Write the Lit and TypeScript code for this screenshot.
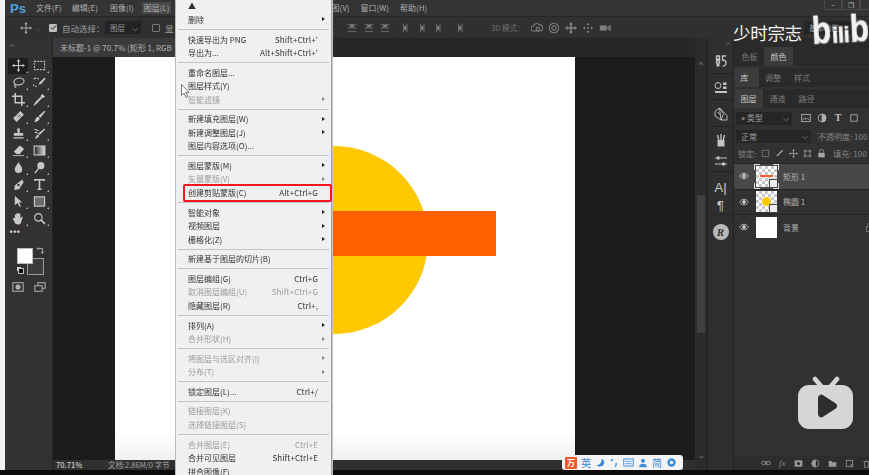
import { LitElement, html, css, svg } from "lit";
import { customElement } from "lit/decorators.js";

const S = (c: unknown, cls = "ic", w = 14, h = 14) =>
  html`<svg class=${cls} width=${w} height=${h} viewBox="0 0 14 14" fill="none" stroke="currentColor" stroke-width="1.2">${c}</svg>`;

const moveP = svg`<path d="M7 1v12M1 7h12"/><path fill="currentColor" stroke="none" d="M7 0l2 2.600H5zM7 14l-2-2.600h4zM0 7l2.600-2v4zM14 7l-2.600 2V5z"/>`;

const toolIcons: unknown[] = [
  moveP,
  svg`<rect x="1.500" y="2.500" width="11" height="9" stroke-dasharray="2 1.300"/>`,
  svg`<ellipse cx="7.500" cy="6" rx="5.500" ry="3.600" transform="rotate(-12 7.500 6)"/><path d="M3.500 9c-1 1.500-.5 3 1 3.500"/>`,
  svg`<path fill="currentColor" stroke="none" d="M12.500 1.500L7 7 6 9.500 8.800 8.500 13.600 3z"/><path d="M6 3.200A4.400 4.400 0 1 0 4 11" stroke-dasharray="2 1"/>`,
  svg`<path stroke-width="1.600" d="M3.500 0v10.500H14M0 3.500h10.500V14"/>`,
  svg`<path fill="currentColor" stroke="none" d="M10 1l3 3-2.200 1.400-.6-.6-5.400 6L2.600 12.600 1.300 13.600.6 13l1-1.500 1.200-2.200 5.900-5.400-.6-.6z"/>`,
  svg`<path fill="currentColor" stroke="none" d="M9 1.200l3.800 3.800L5 12.800 1.200 9z"/><path stroke="#333" stroke-width=".8" d="M5.500 6l2.500 2.500M7 4.500L9.500 7"/>`,
  svg`<path fill="currentColor" stroke="none" d="M12.500 .8l.9.8L8 8.300 6 6.500zM5.400 7.200l1.900 1.700C7 11.500 4 13 1 12.800c1.500-1 1.700-3 1.700-3 .5-1.500 1.500-2.400 2.700-2.600z"/>`,
  svg`<path fill="currentColor" stroke="none" d="M5.500 1.500h3L8 6.500h4v3H2v-3h4zM1.500 11h11v1.500h-11z"/>`,
  svg`<path fill="currentColor" stroke="none" d="M12.500 1.500l.8.8L7 8.500 5.500 7zM5 7.800L6.500 9.200C6 11.500 4 12.500 2 12.500c1-1 1-2.500 3-4.700z"/><path d="M1.500 2.500L6 4M2 5.500l3 1"/>`,
  svg`<path fill="currentColor" stroke="none" d="M8.500 1.500l4.500 4-4.800 5.500-3.600-.1L2 8z"/><path d="M1 12.500h12" stroke-width=".9"/>`,
  svg`<defs><linearGradient id="gr"><stop offset="0" stop-color="#222"/><stop offset="1" stop-color="#ddd"/></linearGradient></defs><rect x="1.200" y="2.200" width="11.600" height="9.600" fill="url(#gr)" stroke="#ccc"/>`,
  svg`<path fill="currentColor" stroke="none" d="M7 1c1 2.500 4 4.800 4 7.800a4 4 0 0 1-8 0C3 5.800 6 3.500 7 1z"/>`,
  svg`<circle cx="8.500" cy="5" r="3.800" fill="currentColor" stroke="none"/><path stroke-width="1.500" d="M6 8l-4 5"/>`,
  svg`<path fill="currentColor" stroke="none" d="M11 1.500l1.500 3-5 7.500-5 1 .5-5z"/><circle cx="7" cy="7.500" r="1.300" fill="#333" stroke="none"/>`,
  svg`<path stroke-width="1.700" d="M2 3.200V1.800h10v1.400M7 1.800v10M4.800 12.200h4.400"/>`,
  svg`<path fill="currentColor" stroke="none" d="M3 .8l8 7.200H7.600l1.900 4.200-1.500.7-1.800-4.300L3 11z"/>`,
  svg`<rect x="1.500" y="2" width="11" height="10" fill="#6a6a6a" stroke="#ccc"/>`,
  svg`<path fill="currentColor" stroke="none" d="M3 6.500V3a.8.800 0 0 1 1.500 0v3-4a.8.800 0 0 1 1.500 0v4-4.500a.8.800 0 0 1 1.500 0V6V2a.8.800 0 0 1 1.500 0v5l1-1.500c.8-1 2-.2 1.400.8L9.500 12c-.5 1-1.500 1.500-2.500 1.500-3 0-4-1.500-4.500-3L1 7.500c-.3-1 .8-1.500 1.300-.8z"/>`,
  svg`<circle cx="5.800" cy="5.800" r="4"/><path stroke-width="1.800" d="M8.800 8.800l4 4"/>`,
];

const alignP = (v: number) =>
  v === 0
    ? svg`<path d="M1 2h12M1 7h12M1 12h12" stroke-width="1"/><rect x="4" y="3" width="6" height="3" fill="currentColor" stroke="none"/>`
    : svg`<path d="M2 1v12M7 1v12" stroke-width="1"/><rect x="3" y="4" width="3" height="6" fill="currentColor" stroke="none"/>`;

const threeD: unknown[] = [
  svg`<path d="M3 10.500a3 3 0 0 1 0-6 3.500 3.500 0 0 1 6.500-1 3.500 3.500 0 0 1 1.500 7z"/><circle cx="8" cy="8" r="2"/>`,
  svg`<circle cx="7" cy="7" r="5.500"/><circle cx="7" cy="7" r="2.500"/>`,
  svg`<path fill="currentColor" stroke="none" d="M7 0l2.500 3H8v3h3V4.500L14 7l-3 2.500V8H8v3h1.500L7 14l-2.500-3H6V8H3v1.500L0 7l3-2.500V6h3V3H4.500z"/>`,
  svg`<path fill="currentColor" stroke="none" d="M7 1l2 2.500H5zM7 13l-2-2.500h4zM1 7l2.500-2v4zM13 7l-2.500 2V5z"/><circle cx="7" cy="7" r="1.200" fill="currentColor" stroke="none"/>`,
  svg`<rect x="1" y="4" width="8" height="6" fill="currentColor" stroke="none"/><path d="M10 7l3-2.500v5z"/>`,
];

const dockIcons: unknown[] = [
  svg`<path stroke-width="1.300" d="M2.500 2h3v3h-3zM2.500 6.500h3v2.500h-3z"/><rect x="2.500" y="10" width="3" height="2.500" fill="currentColor" stroke="none"/><path d="M12 2H8.500v4c3 0 3.500 1 3.500 3s-2 3.500-3.500 3" stroke-width="1.300"/>`,
  svg`<circle cx="4" cy="4.500" r="3" stroke-width="1"/><rect x="9" y="1.500" width="3.500" height="2.500" fill="currentColor" stroke="none"/><rect x="9" y="5.500" width="3.500" height="2.500" fill="currentColor" stroke="none"/><path d="M1 11h12" stroke-width="2"/>`,
  svg`<path d="M1 4.500L5.500 1l4 5.500L7 13 1 9zM5.500 1l7.500 7.500V13H7zM3.500 5l3 3" stroke-width=".9"/>`,
];

const dock2: unknown[] = [
  svg`<rect x="3.500" y="7" width="7" height="6.500" fill="currentColor" stroke="none"/><path stroke-width="1.300" d="M7 7V1M4.800 7L3.500 2M9.200 7l1.300-5"/>`,
  svg`<path stroke-width="1.100" d="M1 4h12M1 10h12"/><rect x="3" y="2.500" width="2.500" height="3" fill="currentColor" stroke="none"/><circle cx="9.500" cy="10" r="1.800" fill="currentColor" stroke="none"/>`,
];

const eye = svg`<path d="M1 7s2.500-4 6-4 6 4 6 4-2.500 4-6 4-6-4-6-4z"/><circle cx="7" cy="7" r="2" fill="currentColor"/>`;

type Row = { t?: string; k?: string; a?: boolean; d?: boolean } | null;
const menu: Row[] = [
  { t: "▲" },
  { t: "删除", a: true }, null,
  { t: "快速导出为 PNG", k: "Shift+Ctrl+'" },
  { t: "导出为...", k: "Alt+Shift+Ctrl+'" }, null,
  { t: "重命名图层..." },
  { t: "图层样式(Y)" },
  { t: "智能滤镜", a: true, d: true }, null,
  { t: "新建填充图层(W)", a: true },
  { t: "新建调整图层(J)", a: true },
  { t: "图层内容选项(O)..." }, null,
  { t: "图层蒙版(M)", a: true },
  { t: "矢量蒙版(V)", a: true, d: true },
  { t: "创建剪贴蒙版(C)", k: "Alt+Ctrl+G" }, null,
  { t: "智能对象", a: true },
  { t: "视频图层", a: true },
  { t: "栅格化(Z)", a: true }, null,
  { t: "新建基于图层的切片(B)" }, null,
  { t: "图层编组(G)", k: "Ctrl+G" },
  { t: "取消图层编组(U)", k: "Shift+Ctrl+G", d: true },
  { t: "隐藏图层(R)", k: "Ctrl+," }, null,
  { t: "排列(A)", a: true },
  { t: "合并形状(H)", a: true, d: true }, null,
  { t: "将图层与选区对齐(I)", a: true, d: true },
  { t: "分布(T)", a: true, d: true }, null,
  { t: "锁定图层(L)...", k: "Ctrl+/" }, null,
  { t: "链接图层(K)", d: true },
  { t: "选择链接图层(S)", d: true }, null,
  { t: "合并图层(E)", k: "Ctrl+E", d: true },
  { t: "合并可见图层", k: "Shift+Ctrl+E" },
  { t: "拼合图像(F)" },
];

@customElement("app-root")
export class AppRoot extends LitElement {
  static styles = css`
    :host { display:block; width:869px; height:475px; position:relative; overflow:hidden; background:#0c0c0c;
      font-family:"Noto Sans CJK SC","Liberation Sans",sans-serif; }
    * { box-sizing:border-box; }
    .root { width:869px; height:475px; display:flex; flex-direction:column; background:#0b0b0b; filter:blur(.4px); position:relative; }
    .app { height:470px; padding-left:5px; background:#f2f2f2; display:flex; flex-direction:column; flex:none; }
    .bar { height:16px; background:#343434; display:flex; align-items:center; color:#b0b0b0; font-size:8px; flex:none; position:relative; }
    .ps { color:#4f9fe0; font:bold 13px "Liberation Sans",sans-serif; width:29px; padding-left:5px; }
    .mi { padding:0 2px; display:inline-block; line-height:12px; }
    .mi1 { margin-right:6px; } .mi2 { margin-right:8px; } .mi3 { margin-right:6px; }
    .mi-on { background:#484848; margin-right:158px; }
    .mi-v { margin-right:7px; }
    .win { margin-left:auto; display:flex; height:10px; align-self:flex-start; }
    .win span { width:18px; border:1px solid #4a4a4a; border-top:none; color:#bbb; display:flex; align-items:center; justify-content:center; font-size:7px; line-height:8px; }
    .win span.w3 { width:9px; border-right:none; }
    .opts { height:22px; background:#303030; border-top:1px solid #262626; display:flex; align-items:center; color:#a0a0a0; font-size:8.500px; flex:none; padding-left:15px; }
    .opts .ic { color:#a8a8a8; }
    .chev { color:#888; font-size:7px; margin-left:3px; width:11px; }
    .chk { width:8px; height:8px; background:#bdbdbd; border-radius:1px; margin-left:3px; display:flex; align-items:center; justify-content:center; }
    .unchk { width:8px; height:8px; border:1px solid #777; border-radius:1px; margin-left:11px; }
    .opt-l { margin-left:5px; width:38px; white-space:nowrap; }
    .sel { width:36px; height:13px; margin-left:5px; background:#222; color:#999; display:flex; align-items:center; justify-content:space-between; padding:0 3px 0 5px; font-size:7.500px; flex:none; }
    .show { margin-left:5px; width:182px; }
    .align { display:flex; gap:12px; width:144px; }
    .ag { display:flex; gap:6.500px; }
    .align .ic, .d3i .ic { color:#808080; }
    .d3 { color:#6e6e6e; width:40px; font-size:7.500px; white-space:nowrap; }
    .d3i { display:flex; gap:5px; }
    .func { margin-left:auto; margin-right:17px; width:48px; height:13px; background:#242424; color:#999; font-size:7.500px; padding-left:5px; line-height:13px; white-space:nowrap; overflow:hidden; }
    .main { flex:1; display:flex; min-height:0; }
    .tools { width:48px; background:#343231; border-right:1px solid #222; display:flex; flex-direction:column; align-items:center; color:#c8c8c8; flex:none; position:relative; }
    .coll { height:19px; width:100%; font-size:7px; color:#888; padding-left:5px; line-height:12px; }
    .grid { display:grid; grid-template-columns:21px 21px; grid-auto-rows:17px; justify-items:center; align-items:center; }
    .t { width:20px; height:16px; display:flex; align-items:center; justify-content:center; position:relative; }
    .t::after { content:""; position:absolute; right:0; bottom:1px; border:solid transparent; border-width:0 0 2.500px 2.500px; border-bottom-color:#bbb; }
    .t.on { background:#1d1d1d; border-radius:1px; }
    .more { font:bold 9px "Liberation Sans",sans-serif; letter-spacing:.5px; height:17px; line-height:10px; width:42px; padding-left:2px; color:#ccc; position:relative; flex:none; }
    .swatch { position:relative; width:42px; height:36px; flex:none; }
    .fg { position:absolute; left:9px; top:4px; width:16px; height:16px; background:#fff; border:1px solid #bbb; z-index:1; }
    .bg { position:absolute; left:19px; top:14px; width:17px; height:17px; background:#3c3c3c; border:1px solid #999; }
    .sw-a { position:absolute; left:28px; top:2px; color:#ccc; }
    .sw-d { position:absolute; left:10px; top:24px; width:6px; height:6px; background:#111; border:1px solid #bbb; box-shadow:-2px -2px 0 -1px #ddd; }
    .modes { display:flex; gap:10px; margin-top:1px; color:#b0b0b0; }
    .center { width:642px; display:flex; flex-direction:column; flex:none; }
    .tabs { height:19px; background:#272727; flex:none; display:flex; }
    .tab { width:122px; background:#3b3b3b; color:#b0b0b0; font-size:8px; line-height:19px; padding-left:7px; white-space:nowrap; overflow:hidden; }
    .doc { flex:1; background:#1c1c1e; padding-left:62px; min-height:0; }
    .canvas { width:460px; height:100%; position:relative; overflow:hidden; background:linear-gradient(#fff 93%, #f1f1f3); }
    .circle { position:absolute; left:125px; top:89px; width:188px; height:188px; border-radius:50%; background:#ffc800; }
    .rect { position:absolute; left:175px; top:154px; width:206px; height:45px; background:#ff6000; }
    .status { height:10px; background:#303030; flex:none; color:#a5a5a5; font-size:7.500px; line-height:10px; display:flex; padding-left:3px; }
    .status b { font-weight:500; width:52px; color:#ccc; }
    .scroll { width:12px; background:#2b2b2b; flex:none; display:flex; flex-direction:column; align-items:center; padding-top:19px; color:#777; font-size:7px; position:relative; }
    .scroll i { font-style:normal; height:11px; transform:scaleX(1.500); line-height:15px; }
    .track { width:8px; height:138px; background:#3f3f3f; margin-top:127px; }
    .scroll .dn { margin-top:auto; margin-bottom:11px; }
    .dock { width:26px; background:#2f2f2f; border-left:1px solid #1f1f1f; flex:none; display:flex; flex-direction:column; align-items:center; color:#c4c4c4; padding-top:9px; position:relative; }
    .dock-c { position:absolute; right:3px; top:0; font-size:7px; color:#888; line-height:9px; }
    .dg { width:100%; display:flex; flex-direction:column; align-items:center; justify-content:center; flex:none; border-bottom:1px solid #232323; }
    .h1 { height:26.500px; padding-top:3px; } .h2 { height:45px; gap:7px; padding-top:4px; } .h3 { height:43px; gap:3px; padding-top:8px; } .h4 { height:35px; border-bottom:none; }
    .dg .ra { font:13px "Liberation Sans",sans-serif; line-height:15px; color:#ccc; }
    .rcirc { width:16px; height:16px; border-radius:50%; background:#b9b9b9; color:#333; font:italic bold 11px "Liberation Serif",serif; text-align:center; line-height:16px; }
    .panel { flex:1; background:#313131; min-width:0; display:flex; flex-direction:column; color:#a8a8a8; font-size:8px; position:relative; overflow:hidden; border-left:1px solid #222; }
    .ph { height:9px; flex:none; background:#2a2a2a; }
    .ptabs { height:19px; margin-bottom:2px; display:flex; background:#2a2a2a; flex:none; align-items:stretch; color:#7a7a7a; }
    .ptabs.last { margin-bottom:0; }
    .ptabs span { padding:0 6.500px; line-height:19px; }
    .ptabs span.on { background:#3b3b3b; color:#c8c8c8; }
    .ptabs.first { padding-left:1px; }
    .ptabs span.sp { padding-right:10px; }
    .row { display:flex; align-items:center; flex:none; white-space:nowrap; }
    .r1 { height:20px; padding-left:2px; gap:6px; }
    .field { height:13px; background:#262626; color:#a0a0a0; display:flex; align-items:center; justify-content:space-between; padding:0 3px 0 5px; flex:none; }
    .f1 { width:56px; margin-right:3px; } .f2 { width:75px; }
    .r1 .ic { color:#b0b0b0; }
    .tt { font:bold 10px "Liberation Serif",serif; color:#bbb; width:10px; text-align:center; line-height:10px; }
    .r2 { height:16px; padding-left:2px; gap:7px; color:#858585; overflow:hidden; }
    .r3 { height:19px; padding-left:4px; gap:5px; color:#858585; }
    .r3 .ic { color:#a5a5a5; }
    .fill { margin-left:2px; }
    .layer { height:25.500px; display:flex; align-items:center; border-top:1px solid #262626; color:#b0b0b0; flex:none; padding-left:4px; position:relative; }
    .layer.on { background:#484848; }
    .eye { color:#ccc; width:18px; flex:none; padding-right:6px; }
    .thumb { width:21px; height:21px; position:relative; background:#fff; margin-right:6px; flex:none; }
    .chk-bg { background:repeating-conic-gradient(#c8c8c8 0 25%, #fff 0 50%) 0 0/6px 6px; }
    .thumb .bar-o { position:absolute; left:4px; right:4px; top:9px; height:2.500px; background:#f0622a; }
    .thumb .dot { position:absolute; left:6px; top:6px; width:9px; height:9px; border-radius:50%; background:#ffc800; }
    .badge { position:absolute; right:-1px; bottom:-1px; width:9px; height:9px; background:#eee; border:1px solid #444; }
    .frame { position:absolute; inset:-2px; --c:#ddd;
      background:
        linear-gradient(var(--c),var(--c)) 0 0/6px 1px no-repeat, linear-gradient(var(--c),var(--c)) 0 0/1px 6px no-repeat,
        linear-gradient(var(--c),var(--c)) 100% 0/6px 1px no-repeat, linear-gradient(var(--c),var(--c)) 100% 0/1px 6px no-repeat,
        linear-gradient(var(--c),var(--c)) 0 100%/6px 1px no-repeat, linear-gradient(var(--c),var(--c)) 0 100%/1px 6px no-repeat,
        linear-gradient(var(--c),var(--c)) 100% 100%/6px 1px no-repeat, linear-gradient(var(--c),var(--c)) 100% 100%/1px 6px no-repeat; }
    .lock { position:absolute; right:-5px; top:8px; color:#888; }
    .pfoot { margin-top:auto; height:14px; background:#2d2d2d; display:flex; align-items:center; gap:8px; padding-left:27px; color:#8a8a8a; flex:none; font:italic 9px "Liberation Serif",serif; }
    .pfoot svg { color:#999; flex:none; }
    .pfoot span { width:9px; text-align:center; }
    .menu { position:absolute; left:175px; top:0; width:156px; height:480px; background:#f0f0f0; border-left:1px solid #bbb; box-shadow:1px 0 0 #a0a0a0, 2px 0 0 #c4c4c4; color:#333; font-size:8px; z-index:3; overflow:hidden; }
    .mtop { margin-top:-.6px; }
    .mrow { height:13.500px; line-height:13.500px; padding-left:12px; display:flex; position:relative; white-space:nowrap; }
    .mrow.dis { color:#9b9b9b; }
    .mk { position:absolute; right:13px; top:0; letter-spacing:.1px; }
    .ma { position:absolute; right:6px; top:4.500px; border-left:3px solid #222; border-top:2.500px solid transparent; border-bottom:2.500px solid transparent; }
    .dis .ma { border-left-color:#888; }
    .msep { height:6.150px; padding:2.600px 2px 0; }
    .msep::before { content:""; display:block; height:1px; background:#c4c4c4; }
    .hit { position:absolute; left:183px; top:184px; width:149px; height:18px; border:2px solid #f2161e; border-radius:2px; z-index:4; }
    .cursor { position:absolute; left:181px; top:84px; z-index:4; }
    .wm { position:absolute; left:733px; top:21px; color:#f4f4f4; font-size:17.500px; z-index:5; line-height:24px; white-space:nowrap; letter-spacing:-.3px; }
    .bili { position:absolute; left:812px; top:13px; color:#f2f2f2; font:900 38px/36px "Liberation Sans",sans-serif; z-index:5; transform:rotate(-3deg); transform-origin:left; white-space:nowrap; display:flex; align-items:baseline; -webkit-text-stroke:.6px #f2f2f2; }
    .bili .big { display:inline-block; width:20px; transform:scaleX(.82); transform-origin:left; }
    .bili .sm { display:inline-block; font-size:22px; width:18px; letter-spacing:-.3px; }
    .tv { position:absolute; left:797px; top:376px; z-index:5; }
    .ime { position:absolute; left:562px; top:455px; width:121px; height:15px; background:#f4f4f4; border-radius:3px; z-index:5; display:flex; align-items:center; padding-left:3px; color:#3a8ad8; font-size:10px; justify-content:space-between; padding-right:6px; }
    .ime .logo { width:12px; height:12px; background:#ef5a28; color:#fff; font:bold 8px "Noto Sans CJK SC",sans-serif; text-align:center; line-height:12px; border-radius:1px; }
    .ghost { height:5px; background:#0b0b0b; }
  `;

  private mi(t: string, cls: string) { return html`<span class="mi ${cls}">${t}</span>`; }

  render() {
    const ti = toolIcons.map((p, i) => html`<div class="t ${i === 0 ? "on" : ""}">${S(p, "ic", 13, 13)}</div>`);
    return html`<div class="root">
      <div class="app">
        <div class="bar">
          <span class="ps">Ps</span>
          ${this.mi("文件(F)", "mi1")}${this.mi("编辑(E)", "mi2")}${this.mi("图像(I)", "mi3")}${this.mi("图层(L)", "mi-on")}
          ${this.mi("图(V)", "mi-v")}${this.mi("窗口(W)", "mi-v")}${this.mi("帮助(H)", "mi-v")}
          <div class="win"><span>−</span><span>❐</span><span class="w3"></span></div>
        </div>
        <div class="opts">
          ${S(moveP, "ic", 12, 12)}<span class="chev">⌵</span>
          <span class="chk">${S(svg`<path stroke="#222" stroke-width="2" d="M2 7l3.500 3.500L12 3"/>`, "ic", 7, 7)}</span>
          <span class="opt-l">自动选择：</span>
          <span class="sel">图层<span>⌵</span></span>
          <span class="unchk"></span><span class="show">显</span>
          <div class="align">
            <div class="ag">${[0, 0, 0].map((v) => S(alignP(v), "ic", 10, 10))}</div>
            <div class="ag">${[1, 1, 1].map((v) => S(alignP(v), "ic", 10, 10))}</div>
            <div class="ag">${S(alignP(1), "ic", 10, 10)}</div>
          </div>
          <span class="d3">3D 模式：</span>
          <div class="d3i">${threeD.map((p) => S(p, "ic", 12, 12))}</div>
          <span class="func">基本功能</span>
        </div>
        <div class="main">
          <div class="tools">
            <div class="coll">‹‹</div>
            <div class="grid">${ti}</div>
            <div class="more">•••</div>
            <div class="swatch">
              <div class="bg"></div><div class="fg"></div><div class="sw-d"></div>
              ${S(svg`<path d="M2 4h8v7M8 9l2 2.500 2-2.500M4 2L2 4l2 2"/>`, "sw-a", 9, 9)}
            </div>
            <div class="modes">
              ${S(svg`<rect x="1" y="2" width="12" height="10"/><circle cx="7" cy="7" r="3" fill="currentColor" stroke="none"/>`, "ic", 12, 12)}
              ${S(svg`<rect x="4.500" y="2" width="8.500" height="6.500"/><rect x="1" y="5.500" width="8.500" height="6.500" fill="#343231"/>`, "ic", 12, 12)}
            </div>
          </div>
          <div class="center">
            <div class="tabs"><div class="tab">未标题-1 @ 70.7% (矩形 1, RGB</div></div>
            <div class="doc"><div class="canvas"><div class="circle"></div><div class="rect"></div></div></div>
            <div class="status"><b>70.71%</b><span>文档:2.86M/0 字节</span></div>
          </div>
          <div class="scroll"><i>^</i><div class="track"></div><i class="dn">⌄</i></div>
          <div class="dock">
            <span class="dock-c">‹‹</span>
            ${dockIcons.map((p) => html`<div class="dg h1">${S(p, "ic", 14, 14)}</div>`)}
            <div class="dg h2">${dock2.map((p) => S(p, "ic", 14, 14))}</div>
            <div class="dg h3"><span class="ra">A|</span><span class="ra">¶</span></div>
            <div class="dg h4"><span class="rcirc">R</span></div>
          </div>
          <div class="panel">
            <div class="ph"></div>
            <div class="ptabs first"><span>色板</span><span class="on">颜色</span></div>
            <div class="ptabs"><span class="on sp">库</span><span>调整</span><span>样式</span></div>
            <div class="ptabs last"><span class="on">图层</span><span>通道</span><span>路径</span></div>
            <div class="row r1"><span class="field f1">⌕ 类型<span>⌵</span></span>
              ${S(svg`<rect x="1" y="2" width="12" height="10"/><path d="M2 10l3-3 2 2 2-2 3 3" />`, "ic", 10, 10)}
              ${S(svg`<circle cx="7" cy="7" r="5.500"/><path fill="currentColor" d="M7 1.500a5.500 5.500 0 0 1 0 11z"/>`, "ic", 10, 10)}
              <span class="tt">T</span>
              ${S(svg`<rect x="2.500" y="2.500" width="9" height="9"/>`, "ic", 10, 10)}
            </div>
            <div class="row r2"><span class="field f2">正常<span>⌵</span></span><span>不透明度: 100</span></div>
            <div class="row r3"><span>锁定:</span>
              ${S(svg`<rect x="2" y="2" width="10" height="10" stroke-dasharray="2 1"/>`, "ic", 9, 9)}
              ${S(svg`<path stroke-width="2" d="M12 2L3 11"/>`, "ic", 9, 9)}
              ${S(moveP, "ic", 9, 9)}
              ${S(svg`<path d="M1 3h12M3 1v12M11 1v12M1 11h12"/>`, "ic", 9, 9)}
              ${S(svg`<rect x="2" y="6" width="10" height="7" fill="currentColor" stroke="none"/><path d="M4 6V3.500a3 3 0 0 1 6 0V6"/>`, "ic", 9, 9)}
              <span class="fill">填充: 100</span></div>
            <div class="layer on">
              ${S(eye, "eye", 18, 10)}
              <div class="thumb chk-bg"><div class="bar-o"></div><div class="badge"></div><div class="frame"></div></div><span>矩形 1</span>
            </div>
            <div class="layer">
              ${S(eye, "eye", 18, 10)}
              <div class="thumb chk-bg"><div class="dot"></div><div class="badge"></div></div><span>椭圆 1</span>
            </div>
            <div class="layer">
              ${S(eye, "eye", 18, 10)}
              <div class="thumb"></div><span>背景</span>
              ${S(svg`<rect x="2" y="6" width="10" height="7"/><path d="M4 6V3.500a3 3 0 0 1 6 0V6"/>`, "lock", 9, 9)}
            </div>
            <div class="pfoot">
              ${S(svg`<path d="M5 7h4"/><rect x="1" y="4.500" width="6" height="5" rx="2.500"/><rect x="7" y="4.500" width="6" height="5" rx="2.500"/>`, "ic", 10, 10)}
              <span>fx</span>
              ${S(svg`<rect x="1" y="2" width="12" height="10" fill="currentColor" stroke="none"/><circle cx="7" cy="7" r="2.500" fill="#2d2d2d" stroke="none"/>`, "ic", 9, 9)}
              ${S(svg`<circle cx="7" cy="7" r="5.500"/><path fill="currentColor" d="M7 1.500a5.500 5.500 0 0 0 0 11z"/>`, "ic", 9, 9)}
              ${S(svg`<path fill="currentColor" stroke="none" d="M1 3h5l1 2h6v7H1z"/>`, "ic", 9, 9)}
              ${S(svg`<rect x="2" y="2" width="10" height="10"/><path d="M9 12V9h3"/>`, "ic", 9, 9)}
              ${S(svg`<path d="M2 4h10M4 4v9h6V4M6 2h2"/>`, "ic", 9, 9)}
            </div>
          </div>
        </div>
      </div>
      <div class="ghost"></div>

      <div class="menu">
        <div class="mtop"></div>
        ${menu.map((m) =>
          m === null
            ? html`<div class="msep"></div>`
            : html`<div class="mrow ${m.d ? "dis" : ""}">${m.t}${m.k ? html`<span class="mk">${m.k}</span>` : ""}${m.a ? html`<span class="ma"></span>` : ""}</div>`
        )}
      </div>
      <div class="hit"></div>
      <svg class="cursor" width="9" height="14" viewBox="0 0 9 14"><path d="M.5.500v11l2.500-2.500 2 4.500 1.800-.8-2-4.300H8z" fill="#fff" stroke="#555" stroke-width=".8"/></svg>

      <div class="wm">少时宗志</div>
      <div class="bili"><span class="big">b</span><span class="sm">ili</span><span class="big">b</span><span class="sm">i</span></div>
      <svg class="tv" width="58" height="54" viewBox="0 0 58 54">
        <path d="M18 3l6 7M40 3l-6 7" stroke="#d6d6d6" stroke-width="4.500" stroke-linecap="round"/>
        <rect x="1" y="9" width="55" height="44" rx="11" fill="#d6d6d6"/>
        <path d="M22 22c0-2 2-3 3.500-2l12.500 8c1.500 1 1.500 3 0 4l-12.500 8c-1.500 1-3.500 0-3.500-2z" fill="#2e2e2e" stroke="#2e2e2e" stroke-width="2" stroke-linejoin="round"/>
      </svg>
      <div class="ime">
        <span class="logo">万</span><span>英</span>
        ${S(svg`<path fill="currentColor" stroke="none" d="M9 1c1 5-2 9-7 9 2 3 10 3 11-3 .3-3-2-5.500-4-6z"/>`, "ic", 10, 10)}
        ${S(svg`<circle cx="4" cy="3" r="1.500" fill="currentColor" stroke="none"/><path stroke-width="1.800" d="M10 7v3l-1.500 2"/>`, "ic", 10, 10)}
        ${S(svg`<rect x="1" y="2.500" width="12" height="9" /><path stroke-width="1" d="M3 5.500h8M3 8.500h8"/>`, "ic", 11, 11)}
        ${S(svg`<circle cx="7" cy="4" r="2.800" fill="currentColor" stroke="none"/><path fill="currentColor" stroke="none" d="M1.500 13c.5-4 2.500-5 5.500-5s5 1 5.500 5z"/>`, "ic", 10, 10)}
        <span>简</span>
        ${S(svg`<circle cx="7" cy="7" r="3.800" stroke-width="3"/>`, "ic", 11, 11)}
      </div>
    </div>`;
  }
}
